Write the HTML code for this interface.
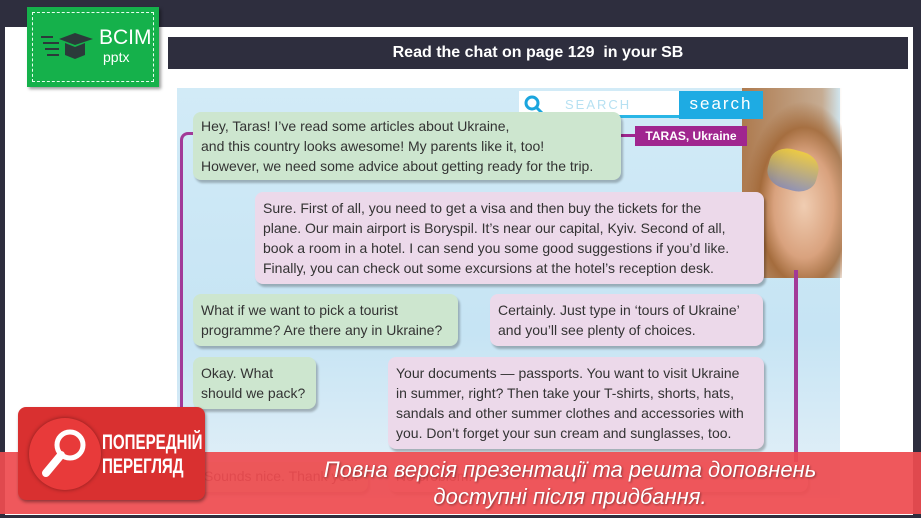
<!DOCTYPE html>
<html><head><meta charset="utf-8"><style>
*{margin:0;padding:0;box-sizing:border-box}
body{width:921px;height:518px;background:#2e2e3e;position:relative;overflow:hidden;font-family:"Liberation Sans",sans-serif}
.abs{position:absolute}
.panel{left:5px;top:27px;width:908px;height:488px;background:#fff}
.title{left:168px;top:37px;width:740px;height:32px;background:#2e2e3e;color:#fff;font-weight:bold;font-size:16px;text-align:center;line-height:32px}
.img{left:177px;top:88px;width:663px;height:410px;background:linear-gradient(180deg,#d2ebf7,#c6e4f4 60%,#e6f1f8)}
.b{position:absolute;border-radius:8px;font-size:14px;line-height:20px;color:#333;padding:4px 8px;box-shadow:2px 3px 2px rgba(0,0,0,.25)}
.g{background:#cde6cf}.p{background:#ecd9ea}
.line{left:180px;top:132px;width:14px;height:330px;border:3px solid #a23a98;border-right:none;border-radius:8px 0 0 8px}
.vline{left:794px;top:270px;width:4px;height:210px;background:#a23a98}
.face{left:742px;top:88px;width:100px;height:190px;background:radial-gradient(ellipse 60% 55% at 62% 62%,#f0cdb2,#d9a27e 50%,rgba(160,100,50,.8) 75%,rgba(255,255,255,0) 100%),linear-gradient(90deg,rgba(170,110,60,.9),rgba(190,130,80,.6) 80%,rgba(255,255,255,0))}
.logo{left:27px;top:7px;width:132px;height:80px;background:#15b14b;box-shadow:2px 2px 3px rgba(0,0,0,.4)}
.logo .in{position:absolute;left:5px;top:5px;right:5px;bottom:5px;border:1.5px dashed #e8fff0}
.banner{left:0;top:452px;width:921px;height:62px;background:rgba(238,75,80,.93)}
.badge{left:18px;top:407px;width:187px;height:93px;background:#d93030;border-radius:8px;box-shadow:1px 2px 3px rgba(0,0,0,.4)}
</style></head><body>
<div class="abs panel"></div>
<div class="abs logo"><div class="in"></div>
<svg class="abs" style="left:12px;top:22px" width="60" height="40"><g fill="#2b3a3a"><path d="M20 10 L36 4 L54 10 L36 16Z"/><path d="M26 14 v12 l10 4 l10-4 v-12 l-10 4z"/><rect x="2" y="7" width="12" height="2"/><rect x="4" y="13" width="16" height="2"/><rect x="6" y="19" width="14" height="2"/><rect x="8" y="25" width="12" height="2"/></g></svg>
<div class="abs" style="left:72px;top:20px;color:#fff;font-size:21px;line-height:22px">BCIM</div>
<div class="abs" style="left:76px;top:42px;color:#fff;font-size:14px">pptx</div></div>
<div class="abs title">Read the chat on page 129&nbsp; in your SB</div>
<div class="abs img"></div>
<div class="abs face"></div>
<div class="abs" style="left:768px;top:150px;width:50px;height:40px;border-radius:40%;background:linear-gradient(180deg,rgba(240,210,60,.85),rgba(110,130,190,.7));transform:rotate(15deg)"></div>
<div class="abs line"></div>
<div class="abs vline"></div>
<div class="abs" style="left:519px;top:91px;width:160px;height:27px;background:#fff;border-bottom:3px solid #29b6e6"><svg width="24" height="24" style="position:absolute;left:3px;top:2px"><circle cx="10" cy="10" r="6" stroke="#1aa5de" stroke-width="3" fill="none"/><path d="M14 14l6 6" stroke="#1aa5de" stroke-width="3"/></svg><span style="position:absolute;left:46px;top:6px;color:#b7e1f2;font-size:13px;letter-spacing:2px">SEARCH</span></div>
<div class="abs" style="left:679px;top:91px;width:84px;height:28px;background:#1eabe3;color:#fff;font-size:17px;letter-spacing:2px;text-align:center;line-height:26px">search</div>
<div class="abs" style="left:635px;top:126px;width:112px;height:20px;background:#a0268f;color:#fff;font-weight:bold;font-size:12px;line-height:20px;text-align:center">TARAS, Ukraine</div>
<div class="abs" style="left:620px;top:134px;width:16px;height:3px;background:#a0268f"></div>
<div class="b g" style="left:193px;top:112px;width:428px;height:68px">Hey, Taras! I’ve read some articles about Ukraine,<br>and this country looks awesome! My parents like it, too!<br>However, we need some advice about getting ready for the trip.</div>
<div class="b p" style="left:255px;top:192px;width:509px;height:92px;padding:6px 8px">Sure. First of all, you need to get a visa and then buy the tickets for the<br>plane. Our main airport is Boryspil. It’s near our capital, Kyiv. Second of all,<br>book a room in a hotel. I can send you some good suggestions if you’d like.<br>Finally, you can check out some excursions at the hotel’s reception desk.</div>
<div class="b g" style="left:193px;top:294px;width:265px;height:52px;padding-top:6px">What if we want to pick a tourist<br>programme? Are there any in Ukraine?</div>
<div class="b p" style="left:490px;top:294px;width:273px;height:52px;padding-top:6px">Certainly. Just type in ‘tours of Ukraine’<br>and you’ll see plenty of choices.</div>
<div class="b g" style="left:193px;top:357px;width:123px;height:52px;padding-top:6px">Okay. What<br>should we pack?</div>
<div class="b p" style="left:388px;top:357px;width:376px;height:92px;padding-top:6px">Your documents — passports. You want to visit Ukraine<br>in summer, right? Then take your T-shirts, shorts, hats,<br>sandals and other summer clothes and accessories with<br>you. Don’t forget your sun cream and sunglasses, too.</div>
<div class="b g" style="left:196px;top:462px;width:172px;height:30px">Sounds nice. Thank you!</div>
<div class="b p" style="left:388px;top:462px;width:420px;height:30px">No problem!</div>
<div class="abs banner"></div>
<div class="abs" style="left:220px;top:456px;width:700px;text-align:center;color:#fff;font-style:italic;font-size:22px;line-height:27px;text-shadow:1px 1px 2px rgba(0,0,0,.4)">Повна версія презентації та решта доповнень<br>доступні після придбання.</div>
<div class="abs badge">
<div class="abs" style="left:11px;top:11px;width:72px;height:72px;border-radius:50%;background:#e83a3a;box-shadow:0 0 4px rgba(0,0,0,.4)"></div>
<svg class="abs" style="left:18px;top:16px" width="60" height="60"><circle cx="34" cy="22" r="13" stroke="#fff" stroke-width="5" fill="none"/><path d="M25 32 L10 50" stroke="#fff" stroke-width="8" stroke-linecap="round"/></svg>
<div class="abs" style="left:84px;top:24px;color:#fff;font-weight:bold;font-size:21px;line-height:24px;transform:scaleX(.72);transform-origin:left;white-space:nowrap">ПОПЕРЕДНІЙ<br>ПЕРЕГЛЯД</div>
</div>
</body></html>
